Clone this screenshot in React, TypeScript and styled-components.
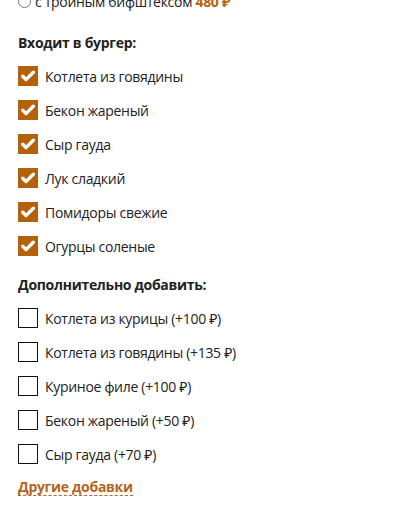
import * as React from 'react'
import styled, { createGlobalStyle } from 'styled-components'

const GlobalStyle = createGlobalStyle`
  body {
    margin: 0;
    background: #fff;
    font-family: 'Open Sans', 'Noto Sans', sans-serif;
    color: #222;
    letter-spacing: -0.3px;
  }
`

const Wrapper = styled.div`
  padding: 0 18px;
  margin-top: -9px;
`

const RadioRow = styled.label`
  display: flex;
  align-items: center;
  gap: 4px;
  font-size: 14px;
  height: 20px;
`

const Radio = styled.span`
  width: 11px;
  height: 11px;
  border-radius: 50%;
  border: 1px solid #777;
  flex-shrink: 0;
`

const Price = styled.b`
  color: #b8620c;
  font-weight: 700;
`

const Heading = styled.div<{ top: number; bottom: number }>`
  font-size: 14px;
  font-weight: 700;
  margin-top: ${({ top }) => top}px;
  margin-bottom: ${({ bottom }) => bottom}px;
  line-height: 20px;
`

const List = styled.div`
  display: flex;
  flex-direction: column;
  gap: 14px;
`

const Row = styled.label`
  display: flex;
  align-items: center;
  gap: 7px;
  font-size: 14px;
  height: 20px;
`

const Box = styled.span<{ checked: boolean }>`
  width: 20px;
  height: 20px;
  box-sizing: border-box;
  flex-shrink: 0;
  display: flex;
  align-items: center;
  justify-content: center;
  ${({ checked }) =>
    checked ? 'background: #b5600b;' : 'border: 1.5px solid #111; background: #fff;'}
`

const MoreLink = styled.a`
  display: inline-block;
  margin-top: 14px;
  font-size: 14px;
  font-weight: 700;
  color: #b5651d;
  text-decoration: none;
  border-bottom: 1px dashed #b5651d;
  line-height: 17px;
`

const Check = () => (
  <svg width="14" height="12" viewBox="0 0 14 12">
    <path d="M1.8 6.3 L5 9.6 L12.3 2.2" fill="none" stroke="#fff" strokeWidth="3.4" strokeLinecap="round" strokeLinejoin="round" />
  </svg>
)

const included = [
  'Котлета из говядины',
  'Бекон жареный',
  'Сыр гауда',
  'Лук сладкий',
  'Помидоры свежие',
  'Огурцы соленые',
]

const extras = [
  'Котлета из курицы (+100 ₽)',
  'Котлета из говядины (+135 ₽)',
  'Куриное филе (+100 ₽)',
  'Бекон жареный (+50 ₽)',
  'Сыр гауда (+70 ₽)',
]

export default function App() {
  return (
    <>
      <GlobalStyle />
      <Wrapper>
        <RadioRow>
          <Radio />
          <span>
            с тройным бифштексом <Price>480 ₽</Price>
          </span>
        </RadioRow>
        <Heading top={22} bottom={13}>Входит в бургер:</Heading>
        <List>
          {included.map((name) => (
            <Row key={name}>
              <Box checked>
                <Check />
              </Box>
              {name}
            </Row>
          ))}
        </List>
        <Heading top={19} bottom={13}>Дополнительно добавить:</Heading>
        <List>
          {extras.map((name) => (
            <Row key={name}>
              <Box checked={false} />
              {name}
            </Row>
          ))}
        </List>
        <MoreLink href="#">Другие добавки</MoreLink>
      </Wrapper>
    </>
  )
}
